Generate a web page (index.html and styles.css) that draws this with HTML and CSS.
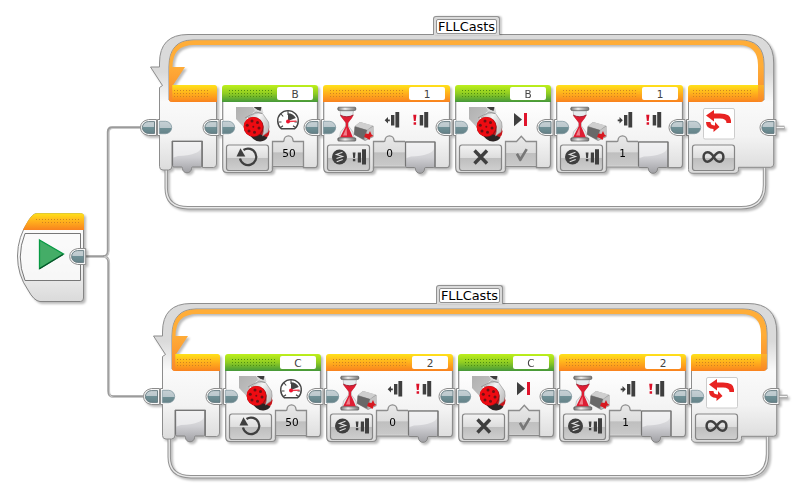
FILE: index.html
```html
<!DOCTYPE html>
<html lang="en">
<head>
<meta charset="utf-8">
<title>FLLCasts program</title>
<link rel="stylesheet" href="styles.css">
</head>
<body>
<svg class="defs" width="0" height="0" aria-hidden="true">
  <defs>
    <linearGradient id="gBody" x1="0" y1="0" x2="0" y2="1"><stop offset="0" stop-color="#fff"/><stop offset=".55" stop-color="#f3f3f3"/><stop offset="1" stop-color="#dadada"/></linearGradient>
    <linearGradient id="gFrame" gradientUnits="userSpaceOnUse" x1="0" y1="34" x2="0" y2="170"><stop offset="0" stop-color="#dadada"/><stop offset=".28" stop-color="#dadada"/><stop offset=".5" stop-color="#fafafa"/><stop offset=".75" stop-color="#f3f3f3"/><stop offset="1" stop-color="#dcdcdc"/></linearGradient>
    <linearGradient id="gOrange" x1="0" y1="0" x2="0" y2="1"><stop offset="0" stop-color="#ffe21a"/><stop offset=".5" stop-color="#ffb01c"/><stop offset="1" stop-color="#f9821f"/></linearGradient>
    <linearGradient id="gArrow" gradientUnits="userSpaceOnUse" x1="0" y1="66" x2="0" y2="102"><stop offset="0" stop-color="#ffad38"/><stop offset="1" stop-color="#f8882a"/></linearGradient>
    <linearGradient id="gButton" x1="0" y1="0" x2="0" y2="1"><stop offset="0" stop-color="#f3f3f3"/><stop offset=".49" stop-color="#dedede"/><stop offset=".5" stop-color="#bdbdbd"/><stop offset="1" stop-color="#cfcfcf"/></linearGradient>
    <linearGradient id="gCell" x1="0" y1="0" x2="0" y2="1"><stop offset="0" stop-color="#e9e9e9"/><stop offset=".55" stop-color="#dcdcdc"/><stop offset=".56" stop-color="#bfbfbf"/><stop offset="1" stop-color="#c9c9c9"/></linearGradient>
    <linearGradient id="gDrawer" x1="0" y1="0" x2="0" y2="1"><stop offset="0" stop-color="#ededed"/><stop offset=".5" stop-color="#d0d0d4"/><stop offset="1" stop-color="#a0a0a4"/></linearGradient>
    <linearGradient id="gPort" x1="0" y1="0" x2="0" y2="1"><stop offset="0" stop-color="#c6d0d4"/><stop offset=".5" stop-color="#bac7cc"/><stop offset=".5" stop-color="#6f9096"/><stop offset="1" stop-color="#668389"/></linearGradient>
    <linearGradient id="gArm" x1="0" y1="0" x2="1" y2="1"><stop offset="0" stop-color="#b0b0b0"/><stop offset="1" stop-color="#c6c6c6"/></linearGradient>
    <linearGradient id="gShell" x1="0" y1="0" x2="1" y2=".5"><stop offset="0" stop-color="#bdbdbd"/><stop offset=".5" stop-color="#f4f4f4"/><stop offset="1" stop-color="#c4c4c4"/></linearGradient>
    <linearGradient id="gPlate" x1="0" y1="0" x2="1" y2="0"><stop offset="0" stop-color="#777"/><stop offset=".4" stop-color="#eee"/><stop offset="1" stop-color="#777"/></linearGradient>
    <pattern id="pOrange" width="3" height="3" patternUnits="userSpaceOnUse"><rect width="1" height="1" fill="#d08420"/></pattern>

    <!-- plug shapes: "in" sits on a left edge, "out" on a right edge; y origin is the plug centre -->
    <symbol id="in" overflow="visible"><path d="M1-8H-1.5V8H1" fill="#fff" stroke="#8c8c8c"/><path d="M.3-6.2H6.500a6.200 6.200 0 0 1 0 12.400H.3z" fill="url(#gPort)" stroke="#78909a" stroke-width=".7"/></symbol>
    <symbol id="out" overflow="visible"><path d="M2-8H-6Q-14-6.500-14 0T-6 8H2z" fill="#f7f7f7" stroke="#8c8c8c"/><path d="M0-5.900H-6.200a5.900 5.900 0 0 0 0 11.800H0z" fill="url(#gPort)" stroke="#62777d" stroke-width=".9"/></symbol>

    <symbol id="button" overflow="visible"><rect x="4.500" y="60" width="42" height="25.500" rx="2.500" fill="url(#gButton)" stroke="#858585" stroke-width="1.200"/></symbol>

    <symbol id="motor" overflow="visible">
      <path d="M30 23h10l1.500 5-6 4z" fill="#d9d9d9"/>
      <path d="M14 22H31L33 26 25 33 21.500 42 14 34z" fill="url(#gArm)"/>
      <path d="M31.500 22H39.500L38.500 26 35 24.500z" fill="#3e3e3e"/>
      <ellipse cx="38.500" cy="46.500" rx="9" ry="8.500" fill="#c8141a"/>
      <path d="M25.500 47q6 10 13 9.500 5-.5 7-4l-9-4z" fill="#2b2424"/>
      <path d="M26 33Q33 26 40.500 28.500L46.500 37Q48 42 46 47L40.500 51Q44 40 36 34 31 31 26 33z" fill="url(#gShell)" stroke="#8d8d8d" stroke-width=".6"/>
      <path d="M23 33L34 27 40 28.500" fill="none" stroke="#888" stroke-width=".7"/>
      <circle cx="31.700" cy="42" r="10" fill="#951216"/><circle cx="31.200" cy="41.600" r="9.600" fill="#ee0b12"/>
      <g fill="#701014"><circle cx="31.300" cy="41.800" r="1"/><circle cx="30" cy="36" r="1.500"/><circle cx="35.500" cy="37.500" r="1.500"/><circle cx="37" cy="43" r="1.500"/><circle cx="32.500" cy="47.300" r="1.500"/><circle cx="27" cy="46" r="1.500"/><circle cx="25.300" cy="40.300" r="1.500"/></g>
    </symbol>
    <symbol id="motorBody" overflow="visible">
      <path class="shell" d="M.7 16V82.500Q.7 87.500 4.500 87.500H47Q50.500 87.500 50.500 84V81.500H81.500V82.700H92.500Q95.500 82.700 95.500 79V16z"/>
      <use href="#button"/><use href="#motor"/>
    </symbol>
    <symbol id="drawer" overflow="visible"><path d="M.5 57V81.300q0 1.200 1.500 1.200H9.500q1 0 1 1.500a4.500 4.300 0 0 0 9 0q0-1.500 1-1.500H28.500q1.500 0 1.500-1.200V57z" fill="url(#gDrawer)" stroke="#858585"/><path d="M1.500 57.500h27.500v6Q27 70.500 6 71.500L1.500 73z" fill="#f4f4f5" opacity=".7"/><path d="M.5 81V57H30V82" fill="none" stroke="#757575" stroke-width="1.200"/></symbol>
    <symbol id="sensorBody" overflow="visible">
      <path class="shell" d="M.7 16V82.500Q.7 87.500 4.500 87.500H46.500Q50.500 87.500 50.500 84V82H112V82.700H123.500Q126.500 82.700 126.500 79V16z"/>
      <use href="#button"/>
      <path class="cell" d="M51 80.800V56.500h10q1 0 1-1.200a4.500 4.500 0 0 1 9 0q0 1.200 1 1.200H82v24.300z"/><path class="edge" d="M50.500 84V56.500h10.500q1 0 1-1.200a4.500 4.500 0 0 1 9 0q0 1.200 1 1.200H82"/>
      <use href="#drawer" x="82"/>
      <path d="M17 26H30.500L29.500 31 25.500 37V41L30 47 31 52.500H16.500L17.500 47 22.500 41V37L18 31z" fill="#e6ecee" stroke="#aaa" stroke-width=".6"/>
      <path d="M17 30.500Q24 33 30.500 30L29 33 25 38V41L30 52.500H17L22.800 41V38z" fill="#dd1e34"/><path d="M17 30Q24 33.500 30.500 30" fill="none" stroke="#951226" stroke-width=".8"/>
      <path d="M23.500 42.500L20 50.500H24z" fill="#f0808c"/>
      <rect x="14.800" y="22.200" width="18" height="3.200" rx="1" fill="url(#gPlate)" stroke="#444" stroke-width=".6"/><rect x="14.800" y="52.800" width="18" height="3.300" rx="1" fill="url(#gPlate)" stroke="#444" stroke-width=".6"/>
      <path d="M32 41L37 37 50.500 41V52L42 56 31.500 50z" fill="#9b9b9b"/><path d="M32 41L37 37 50 40.500 44 45z" fill="#cfcfcf"/><path d="M31.500 41.500L44 45 40.500 54.500 31 49.500z" fill="#686868"/><path d="M44.500 45L50 41.500 50.500 51 42 55z" fill="#c4c4c4"/>
      <path d="M42.500 48.500L45.500 49 47 46 48.500 49.500 50.500 51 47.500 52 46.500 55 43.500 53 41 52z" fill="#d71920"/>
      <circle cx="16.500" cy="72" r="7.500" fill="#3f3f3f"/><path d="M19.500 67.300L13.500 69.500 19.500 71.500 13.500 73.500M19.700 74.500L13.700 76.800" fill="none" stroke="#e0e0e0" stroke-width="1.200"/>
      <path class="ink" d="M29.700 67.500h2.800l-.5 5.500h-1.800zM29.900 74h2.400v2.200h-2.400zM34.800 67.500H38V77.500H34.800zM39 64.300H43V79.500H39z"/>
      <path d="M90.200 29.700h3.200l-.7 6.300h-1.800zM90.600 37.200h2.500v2.500h-2.500z" fill="#dc1028"/><path class="ink" d="M96.700 30H100.200V40.500H96.700zM101.200 27H105.200V42.500H101.200z"/>
    </symbol>
    <symbol id="bars" overflow="visible"><path class="ink" d="M68 30H71.400V40.500H68zM72.400 27H76.200V42.500H72.400z"/></symbol>
    <symbol id="less" overflow="visible"><use href="#bars"/><path class="ink" d="M61.700 35.300L65 32V34.400H66.800V36.200H65V38.600z"/></symbol>
    <symbol id="more" overflow="visible"><use href="#bars"/><path class="ink" d="M66.800 35.300L63.500 32V34.400H61.700V36.200H63.500V38.600z"/></symbol>
    <symbol id="onArt" overflow="visible">
      <use href="#motorBody"/>
      <path class="cell" d="M51 80.800V56.500H61q1 0 1-1.200a4.500 4.500 0 0 1 9 0q0 1.200 1 1.200H81.500v24.300z"/><path class="edge" d="M50.500 84V56.500H61q1 0 1-1.200a4.500 4.500 0 0 1 9 0q0 1.200 1 1.200H81.500V83"/>
      <path d="M59.300 43.700A10.300 10.300 0 1 1 72.700 43.700z" fill="#fff" stroke="#444" stroke-width="1.400"/><path d="M66 36V28.300a9 9 0 0 1 7.800 4.700L66 36z" fill="#444"/><path d="M66 26v4M59 29l2.200 2.500M56.500 37h3M59 42.200l2-1.500M73 42.200l-2-1.500M75.500 37h-3" stroke="#444" stroke-width="1.100"/><path d="M66 36.500l8.500-.4" stroke="#e34" stroke-width="1.400"/><circle cx="66" cy="36.600" r="2" fill="#ec1530"/>
      <path d="M21.500 65A8.200 8.200 0 1 1 18 73.500" fill="none" stroke="#3f3f3f" stroke-width="2.200"/><path class="ink" d="M14.500 71.500L18.500 63.300 23.300 71.500z"/>
    </symbol>
    <symbol id="offArt" overflow="visible">
      <use href="#motorBody"/>
      <path class="cell" d="M51 80.800V56.500H61.500l4.800-5.200 4.800 5.200h10.400v24.300z"/><path class="edge" d="M50.500 84V56.500H61.500l4.800-5.200 4.800 5.200H81.500V83"/>
      <path class="ink" d="M59 28l8 6.600-8 6.700z"/><path d="M69 28h3v13h-3z" fill="#e0142c"/>
      <path d="M19.500 65.500L32 78.500M32 65.500L19.500 78.500" stroke="#3f3f3f" stroke-width="3.400"/>
      <path d="M60.800 69.500l2.200-1.400 2.400 3.900 5.200-8.600 2.200 1.300-6.700 11.200q-1 1-1.800-.2z" fill="#777"/>
    </symbol>
    <symbol id="frameArt" overflow="visible">
      <path d="M166.200 169V188Q166.200 207.700 188 207.700H741Q764.500 207.700 764.500 185V165" fill="none" stroke="#929292" stroke-width="3.400"/><path d="M166.200 169V188Q166.200 207.700 188 207.700H741Q764.500 207.700 764.500 185V165" fill="none" stroke="#e8e8e8" stroke-width="1.400"/>
      <path class="outline" d="M159.500 67H150.500l12 18.500-3 2V166.500Q159.500 170 163 170H168.500Q172 170 172 166V141H202.500V167.500H213.500Q216.500 167.500 216.500 164V100H169V67Q169 40 193 40H740Q764 40 764 64V100H688.500V169.500Q688.500 173.300 693 173.300H734Q738.500 173.300 738.500 169.500V167.300H770.500Q773.700 167.300 773.700 164V63Q773.700 34.500 745 34.500H188Q159.500 34.500 159.500 63z"/>
      <path class="band" d="M169.200 98V66Q169.200 40.200 194 40.200H739Q763.600 40.200 763.600 64V98H758V65Q758 45 738 45H194Q172.500 45 172.500 67H185L172.500 86V98z" fill="url(#gArrow)"/>
      <path d="M169 85H214.500Q217 85 217 87.500V102H172Q169 102 169 99z" fill="url(#gOrange)"/><path d="M169 70H172.300V102Q169 102 169 99z" fill="url(#gArrow)"/><path d="M174 90H208V97H174z" fill="url(#pOrange)"/>
      <path d="M688 88Q688 85 691 85H763.600V99Q763.600 102 760.600 102H688z" fill="url(#gOrange)"/><path d="M758 66H763.600V99Q763.600 102 758 102z" fill="url(#gArrow)" opacity=".65"/><path d="M693 90H752V97H693z" fill="url(#pOrange)"/>
      <use href="#drawer" x="172" y="84.500"/>
      <use href="#button" x="688" y="85"/>
      <rect x="703.500" y="108.500" width="31" height="30.500" rx="1.500" fill="#fff" stroke="#ccc"/>
      <path d="M706 115.500l8-5.500v3.500h6q11 0 11 7V123h-4.500q0-4.500-6.500-4.500h-6v3zM706 122h4.500q0 3.500 4.500 3.500V122l4.500 5-6 5v-3q-7.500 0-7.500-7z" fill="#e82322"/>
      <path d="M713.800 157c-2.500-4-4.500-4.700-6.300-4.700-5.200 0-5.200 9.400 0 9.400 5.500 0 7-9.400 12-9.400 5.200 0 5.200 9.400 0 9.400-2.500 0-4-1.500-5.700-4.700z" fill="none" stroke="#404040" stroke-width="2.500"/>
      <path d="M774 127.500H784.500" stroke="#999" stroke-width="3.600"/><path d="M774 127.500H784" stroke="#f4f4f4" stroke-width="1.500"/>
      <use href="#out" x="154.500" y="127.500"/><use href="#in" x="159" y="127.500"/>
      <use href="#out" x="217" y="127.500"/><use href="#in" x="688" y="127.500"/><use href="#out" x="774" y="127.500"/>
    </symbol>
  </defs>
</svg>

<main class="canvas">
  <svg class="wires" width="806" height="500" aria-hidden="true">
    <g class="wire-dark"><path d="M84 256.500H103Q108 256.500 108 251V132Q108 127.500 112 127.500H142"/><path d="M103 256.500Q108.500 256.500 108.500 262V391Q108.500 396.500 113 396.500H145"/></g>
    <g class="wire-light"><path d="M84 257.500H104Q109 256 109 251V133Q109 128.500 113 128.500H142"/><path d="M104 257Q109.500 257.500 109.500 263V391Q109.500 397.500 114 397.500H145"/></g>
  </svg>

  <section class="start" aria-label="Start">
    <svg width="70" height="92" viewBox="17 213 70 92">
      <path d="M37 213.500H80.500Q83.500 213.500 83.500 216.500V298Q83.500 301.500 80.500 301.500H40Q34 301 28 290 17.500 275 17.500 256 17.500 237 29 220 33 213.500 37 213.500z" fill="url(#gBody)" stroke="#858585"/>
      <path d="M37 213.200H81Q84 213.200 84 216V230H23Q31 213.200 37 213.200z" fill="url(#gOrange)"/><path d="M36 217H80V224H42V221H36z" fill="url(#pOrange)"/>
      <path d="M25 233.500H80.500V280.500H25Q15.500 257 25 233.500z" fill="#fafafa" fill-opacity=".8" stroke="#777"/>
      <path d="M39.500 240L63.500 254 39.500 268.500z" fill="#44ad67" stroke="#079a43" stroke-width="1.300"/><path d="M39.500 268.700L63 254.500" stroke="#0a5029" stroke-width="1.200"/>
      <use href="#out" x="83.700" y="256.500"/>
    </svg>
  </section>

  <section class="loop loop-top">
    <svg class="frame" width="806" height="220"><use href="#frameArt"/></svg>
    <h2 class="tab"><span>FLLCasts</span></h2>
    <div class="track">
      <article class="block motor"><svg class="art"><use href="#onArt"/><text x="67" y="72">50</text></svg><header class="green"><i></i><b>B</b></header><svg class="ports"><use href="#in" y="42.500"/><use href="#out" x="96" y="42.500"/></svg></article>
      <article class="block sensor"><svg class="art"><use href="#sensorBody"/><use href="#less"/><text x="66.500" y="72">0</text></svg><header class="orange"><i></i><b>1</b></header><svg class="ports"><use href="#in" y="42.500"/><use href="#out" x="127" y="42.500"/></svg></article>
      <article class="block motor"><svg class="art"><use href="#offArt"/></svg><header class="green"><i></i><b>B</b></header><svg class="ports"><use href="#in" y="42.500"/><use href="#out" x="96" y="42.500"/></svg></article>
      <article class="block sensor"><svg class="art"><use href="#sensorBody"/><use href="#more"/><text x="66.500" y="72">1</text></svg><header class="orange"><i></i><b>1</b></header><svg class="ports"><use href="#in" y="42.500"/><use href="#out" x="127" y="42.500"/></svg></article>
    </div>
  </section>

  <section class="loop loop-bottom">
    <svg class="frame" width="806" height="220"><use href="#frameArt"/></svg>
    <h2 class="tab"><span>FLLCasts</span></h2>
    <div class="track">
      <article class="block motor"><svg class="art"><use href="#onArt"/><text x="67" y="72">50</text></svg><header class="green"><i></i><b>C</b></header><svg class="ports"><use href="#in" y="42.500"/><use href="#out" x="96" y="42.500"/></svg></article>
      <article class="block sensor"><svg class="art"><use href="#sensorBody"/><use href="#less"/><text x="66.500" y="72">0</text></svg><header class="orange"><i></i><b>2</b></header><svg class="ports"><use href="#in" y="42.500"/><use href="#out" x="127" y="42.500"/></svg></article>
      <article class="block motor"><svg class="art"><use href="#offArt"/></svg><header class="green"><i></i><b>C</b></header><svg class="ports"><use href="#in" y="42.500"/><use href="#out" x="96" y="42.500"/></svg></article>
      <article class="block sensor"><svg class="art"><use href="#sensorBody"/><use href="#more"/><text x="66.500" y="72">1</text></svg><header class="orange"><i></i><b>2</b></header><svg class="ports"><use href="#in" y="42.500"/><use href="#out" x="127" y="42.500"/></svg></article>
    </div>
  </section>
</main>
</body>
</html>
```
FILE: styles.css
```css
* { box-sizing: border-box; }
body { margin: 0; background: #fff; font-family: "DejaVu Sans", Verdana, sans-serif; }
svg { display: block; overflow: visible; }
.defs { position: absolute; }

.canvas { position: relative; width: 806px; height: 500px; overflow: hidden; }
.wires { position: absolute; inset: 0; fill: none; }
.wire-dark { stroke: #9b9b9b; stroke-width: 2.4; }
.wire-light { stroke: #c9c9c9; stroke-width: 1.2; }
.start { position: absolute; left: 17px; top: 213px; filter: drop-shadow(2px 2px 1px #0004); }

/* Loops are nodes on the free canvas; their blocks flow along a track. */
.loop { position: absolute; width: 806px; height: 220px; }
.loop-top { left: 0; top: 0; }
.loop-bottom { left: 3px; top: 269px; }
.frame { position: absolute; inset: 0; filter: drop-shadow(2px 2px 1px #0004); }
.outline { fill: url(#gFrame); stroke: #8d8d8d; }

.tab {
  position: absolute; left: 433px; top: 16px; width: 67px; height: 19px; margin: 0; padding: 2px 2px 0;
  border: 1px solid #929292; border-bottom: 0; border-radius: 3px 3px 0 0; background: #dadada;
  box-shadow: 2px 0 2px #0003; font-weight: 400; font-size: 12.9px; line-height: 14px;
}
.tab span { display: block; height: 15px; border: 1px solid #929292; border-radius: 2px; background: #fff; text-align: center; white-space: nowrap; }

.track { display: flex; gap: 5px; padding: 85px 0 0 222px; }
.block { position: relative; flex: none; height: 89px; filter: drop-shadow(2px 2px 1px #0004); }
.motor { width: 96px; }
.sensor { width: 127px; }
.art, .ports { position: absolute; left: 0; top: 0; width: 100%; height: 89px; }
.shell { fill: url(#gBody); stroke: #8c8c8c; stroke-width: 1.2; }
.cell { fill: url(#gCell); }
.edge { fill: none; stroke: #8c8c8c; stroke-width: 1.3; }
.ink { fill: #3f3f3f; }
.art text { font-size: 10.5px; text-anchor: middle; fill: #000; }

.block header { position: relative; display: flex; align-items: center; height: 17px; padding: 0 5px 0 7px; border-radius: 3px 3px 0 0; }
.orange { --dot: #d08420; background: linear-gradient(#ffe21a, #ffb01c 50%, #f9821f); }
.green { --dot: #50900f; background: linear-gradient(#bef01b, #8fcc22 50%, #45983a); }
.block header i { flex: 1; height: 7px; margin-right: 4px; background: conic-gradient(from 0deg at 1px 1px, #0000 0 270deg, var(--dot) 270deg) 0 0 / 3px 3px; }
.block header b { display: block; width: 36px; height: 13px; border-radius: 2px; background: #fff; color: #444; font-size: 10.5px; font-weight: 400; line-height: 14px; text-align: center; }
```
